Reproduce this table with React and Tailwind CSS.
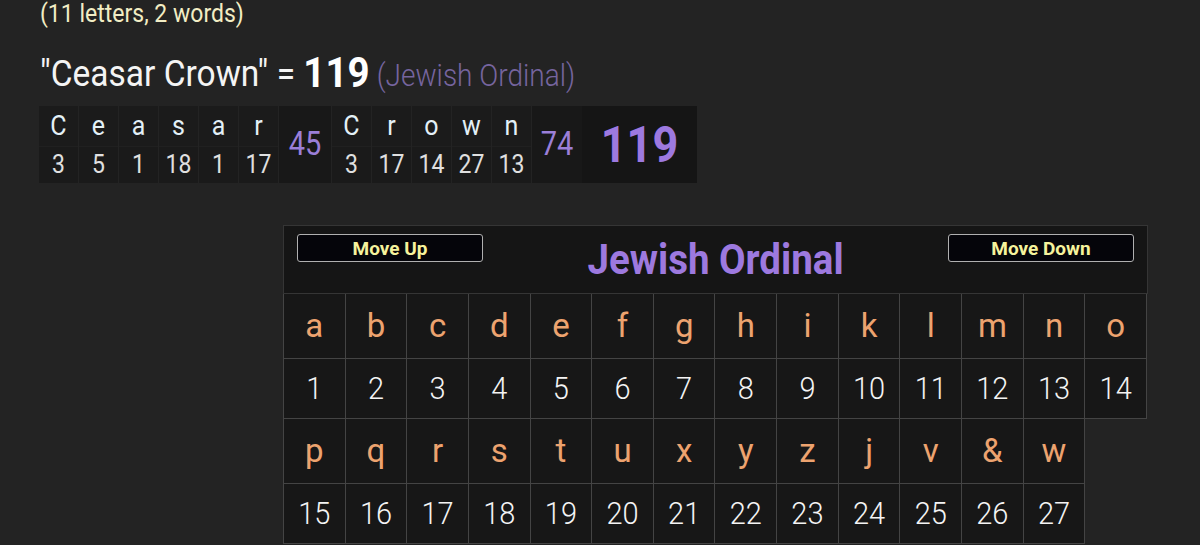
import React from "react";

const word1 = [["C",3],["e",5],["a",1],["s",18],["a",1],["r",17]];
const word2 = [["C",3],["r",17],["o",14],["w",27],["n",13]];

const row1 = [["a",1],["b",2],["c",3],["d",4],["e",5],["f",6],["g",7],["h",8],["i",9],["k",10],["l",11],["m",12],["n",13],["o",14]];
const row2 = [["p",15],["q",16],["r",17],["s",18],["t",19],["u",20],["x",21],["y",22],["z",23],["j",24],["v",25],["&",26],["w",27]];

function LetterCell({ l, n }) {
  return (
    <div className="flex flex-col w-[40px] border-r border-[#232323]">
      <div className="h-[40px] flex items-center justify-center text-[25px] text-[#e3f0f7] bg-[#1b1b1b]"><span className="inline-block scale-y-[1.12]">{l}</span></div>
      <div className="h-[37px] flex items-center justify-center text-[23px] text-[#e0e0e0] bg-[#1a1a1a] border-t border-[#202020]"><span className="inline-block scale-y-[1.12]">{n}</span></div>
    </div>
  );
}

function CipherRow({ items }) {
  return (
    <div className="flex flex-col">
      <div className="flex">
        {items.map(([l], i) => (
          <div key={i} className="w-[61.65px] h-[65px] border-r border-b border-[#444] bg-[#171717] flex items-center justify-center text-[33px] text-[#eda36f]">{l}</div>
        ))}
      </div>
      <div className="flex">
        {items.map(([l, n], i) => (
          <div key={i} className="w-[61.65px] h-[60px] border-r border-b border-[#444] bg-[#171717] flex items-center justify-center text-[29px] font-light text-[#f4f4f4]"><span className="inline-block scale-y-[1.08]">{n}</span></div>
        ))}
      </div>
    </div>
  );
}

export default function App() {
  return (
    <div className="min-h-[545px] h-[545px] overflow-hidden bg-[#232323] pt-[1px]" style={{ fontFamily: "Roboto, 'Noto Sans', sans-serif" }}>
      <div className="pl-[40px] text-[23px] leading-[26px] text-[#f2edc4]"><span className="inline-block scale-y-[1.1]">(11 letters, 2 words)</span></div>
      <div className="pl-[40px] mt-[16px] h-[44px] flex items-baseline text-[33.5px] text-[#f4f4f4]">
        <span className="inline-block scale-y-[1.12] whitespace-pre">"Ceasar Crown" = </span>
        <span className="inline-block scale-y-[1.12] font-bold text-[38.5px] text-white">119</span>
        <span className="inline-block scale-y-[1.12] ml-[7px] text-[28px] font-light text-[#76659f]">(Jewish Ordinal)</span>
      </div>
      <div className="ml-[39px] mt-[19px] w-[658px] h-[77px] bg-[#1c1c1c] flex">
        {word1.map(([l, n], i) => <LetterCell key={i} l={l} n={n} />)}
        <div className="w-[53px] flex items-center justify-center bg-[#181818] text-[29px] text-[#9b7fd8] border-r border-[#232323]"><span className="inline-block scale-y-[1.12]">45</span></div>
        {word2.map(([l, n], i) => <LetterCell key={i} l={l} n={n} />)}
        <div className="w-[50px] flex items-center justify-center bg-[#181818] text-[29px] text-[#9b7fd8]"><span className="inline-block scale-y-[1.12]">74</span></div>
        <div className="flex-1 flex items-center justify-center bg-[#151515] text-[45px] font-bold text-[#9d79e0]"><span className="inline-block scale-y-[1.12]">119</span></div>
      </div>
      <div className="ml-[283px] mt-[42px] w-[865px]">
        <div className="h-[69px] border border-[#353535] bg-[#151515] relative flex items-start justify-between px-[13px] pt-[8px]">
          <button className="w-[186px] h-[28px] bg-[#05050a] border border-[#b0b0b0] rounded-[3px] text-[19px] font-bold text-[#f6f39c] leading-none">Move Up</button>
          <div className="absolute left-0 right-0 top-[14px] text-center text-[38.5px] font-bold text-[#9d79df] leading-[40px] pointer-events-none"><span className="inline-block scale-y-[1.08]">Jewish Ordinal</span></div>
          <button className="w-[186px] h-[28px] bg-[#05050a] border border-[#b0b0b0] rounded-[3px] text-[19px] font-bold text-[#f6f39c] leading-none">Move Down</button>
        </div>
        <div className="border-l border-[#444]">
          <CipherRow items={row1} />
          <CipherRow items={row2} />
        </div>
      </div>
    </div>
  );
}
